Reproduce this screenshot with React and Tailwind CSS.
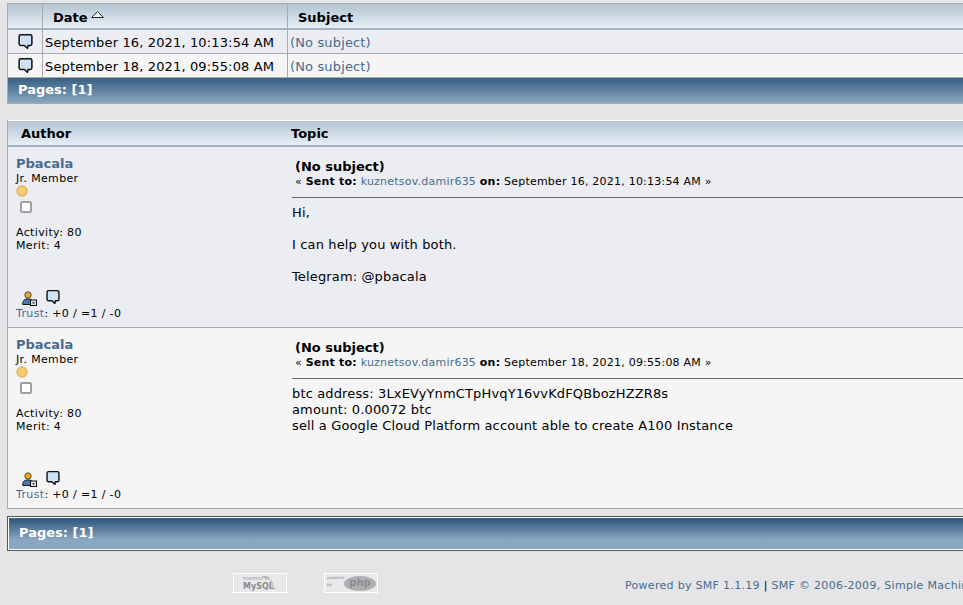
const font = { fontFamily: '"DejaVu Sans", Verdana, sans-serif' };

function Bubble({ className = "", fill = "#cfe2f5" }) {
  return (
    <svg viewBox="0 0 16 17" className={className}>
      <path d="M3 1.2h10a1.8 1.8 0 0 1 1.8 1.8v8a1.8 1.8 0 0 1-1.8 1.8h-2.3l-.5 3-3.5-3H3A1.8 1.8 0 0 1 1.2 11V3A1.8 1.8 0 0 1 3 1.2z" fill={fill} stroke="#111" strokeWidth="1.6" strokeLinejoin="round" />
    </svg>
  );
}

function UserIcon() {
  return (
    <svg viewBox="0 0 15 15" className="w-[15px] h-[15px]">
      <circle cx="6" cy="4" r="3.2" fill="#e8a820" stroke="#333" strokeWidth="0.8" />
      <path d="M0.7 13.5c0-4.5 2-5.5 5.3-5.5s5.3 1 5.3 5.5z" fill="#4a76b8" stroke="#122" strokeWidth="1" />
      <rect x="8.5" y="9" width="6" height="5.5" fill="#dfe6ee" stroke="#111" strokeWidth="1" />
      <rect x="10.5" y="11" width="2" height="1.5" fill="#333" />
    </svg>
  );
}

function Coin() {
  return (
    <svg viewBox="0 0 12 12" className="w-3 h-3 block">
      <circle cx="6" cy="6" r="5.7" fill="#e3b660" />
      <circle cx="6" cy="6" r="4" fill="#f5cd73" />
    </svg>
  );
}

function MessageRow({ date, alt }) {
  return (
    <div className={`flex h-6 border-b border-[#aaaaaa] text-[13px] leading-[26px] tracking-[0.14px] ${alt ? "bg-[#f5f5f6]" : "bg-[#ecedf3]"}`}>
      <div className="w-[35px] border-r border-[#aaaaaa] flex justify-center items-start pt-[3px] pl-[1px]">
        <Bubble className="w-[15px] h-[17px]" />
      </div>
      <div className="w-[245px] border-r border-[#aaaaaa] pl-[2px] text-black whitespace-nowrap">{date}</div>
      <div className="pl-[2px] text-[#476c8e]">(No subject)</div>
    </div>
  );
}

function Post({ date, alt, children }) {
  return (
    <div className={`flex h-[181px] border-b border-[#aaaaaa] ${alt ? "bg-[#f5f5f6]" : "bg-[#ecedf3]"}`}>
      <div className="w-[284px] shrink-0 pl-2 pt-[9px] flex flex-col text-[11px] leading-[13px] text-black tracking-[0.35px]">
        <div className="text-[13px] leading-[15px] font-bold text-[#476c8e] tracking-normal">Pbacala</div>
        <div className="mt-[1px]">Jr. Member</div>
        <div><Coin /></div>
        <div className="mt-[4px] ml-[4px] w-3 h-3 border-2 border-[#a0a0a0] rounded-[2px] bg-white" />
        <div className="mt-[13px]">Activity: 80</div>
        <div>Merit: 4</div>
        <div className="mt-auto flex gap-[9px] ml-[6px] items-end">
          <UserIcon />
          <Bubble className="w-[14px] h-4 relative -top-[1px]" />
        </div>
        <div className="mt-[1px] mb-[7px]"><span className="text-[#476c8e]">Trust</span>: +0 / =1 / -0</div>
      </div>
      <div className="flex-1 pt-[12px]">
        <div className="pl-[3px] text-[13px] leading-[15px] font-bold text-black">(No subject)</div>
        <div className="pl-[3px] mt-[1px] text-[11px] leading-[13px] text-black whitespace-nowrap tracking-[0.22px]">
          « <b>Sent to:</b> <span className="text-[#476c8e]">kuznetsov.damir635</span> <b>on:</b> {date} »
        </div>
        <div className="mt-[9px] border-t border-[#666666] pt-[7px] text-[13px] leading-[16px] text-black whitespace-nowrap tracking-[0.14px]">
          {children}
        </div>
      </div>
    </div>
  );
}

export default function App() {
  return (
    <div style={font} className="w-[963px] h-[605px] overflow-hidden bg-[#e5e5e8] pt-[3px] pl-[7px]">
      <div className="w-[1100px]">
        <div className="border border-[#aaaaaa] border-b-0">
          <div className="flex h-[26px] bg-gradient-to-b from-[#b4c4d3] to-[#e6eff7] border-b-2 border-[#a3b2c2] text-[13px] font-bold text-black leading-[27px]">
            <div className="w-[35px] border-r border-[#aaaaaa]" />
            <div className="w-[245px] border-r border-[#aaaaaa] pl-[10px] flex items-center gap-[3px]">
              <span className="relative top-[1px]">Date</span>
              <svg viewBox="0 0 13 7" className="w-[13px] h-[7px] -mt-[3px]"><path d="M0.5 6.5h12L6.5 0.7z" fill="#fff" stroke="#222" /></svg>
            </div>
            <div className="pl-[10px]">Subject</div>
          </div>
          <MessageRow date="September 16, 2021, 10:13:54 AM" />
          <MessageRow date="September 18, 2021, 09:55:08 AM" alt />
          <div className="h-[26px] bg-gradient-to-b from-[#375f82] to-[#8aa7c1] border-b border-[#aaaaaa] pl-[10px] text-[13px] font-bold text-white leading-[24px]">Pages: [1]</div>
        </div>

        <div className="mt-[16px] border-x border-[#aaaaaa]">
          <div className="flex h-[27px] bg-gradient-to-b from-[#b4c4d3] to-[#e6eff7] border-b-2 border-[#a3b2c2] border-t border-t-white text-[13px] font-bold text-black leading-[25px]">
            <div className="w-[283px] pl-[13px]">Author</div>
            <div>Topic</div>
          </div>
          <Post date="September 16, 2021, 10:13:54 AM">
            <div>Hi,</div>
            <div className="mt-[16px]">I can help you with both.</div>
            <div className="mt-[16px]">Telegram: @pbacala</div>
          </Post>
          <Post date="September 18, 2021, 09:55:08 AM" alt>
            <div>btc address: 3LxEVyYnmCTpHvqY16vvKdFQBbozHZZR8s</div>
            <div>amount: 0.00072 btc</div>
            <div>sell a Google Cloud Platform account able to create A100 Instance</div>
          </Post>
        </div>

        <div className="mt-[7px] h-[35px] border border-[#555555] p-[1px] pr-0 bg-white">
          <div className="h-full bg-gradient-to-b from-[#375f82] from-10% to-[#8aa7c1] to-70% pl-[10px] text-[13px] font-bold text-white leading-[29px]">Pages: [1]</div>
        </div>

        <div className="flex items-center mt-[22px] pl-[226px] whitespace-nowrap">
          <div className="w-[54px] h-5 border border-white bg-[#e9e9eb] relative overflow-hidden text-[#9a9a9c]">
            <span className="absolute left-[9px] top-[1px] text-[4px] leading-[8px]">POWERED BY</span>
            <span className="absolute left-[9px] top-[8px] text-[8px] leading-[10px] font-bold text-[#8a8a8c]">MySQL</span>
            <svg viewBox="0 0 54 20" className="absolute inset-0 w-full h-full"><path d="M30 3c6-1 10 3 11 9 1 3 3 4 3 5M30 3l4 1" fill="none" stroke="#9a9a9c" strokeWidth="0.8" /></svg>
          </div>
          <div className="ml-[37px] w-[54px] h-5 border border-white bg-[#e9e9eb] flex items-center justify-end pr-[1px] relative">
            <span className="absolute left-[2px] top-[1px] text-[4px] leading-[6px] text-[#8a8a8c]">powered</span>
            <span className="absolute left-[2px] top-[8px] text-[4px] leading-[6px] text-[#8a8a8c]">by</span>
            <div className="w-[32px] h-[15px] rounded-[50%] bg-[#b0b0b3] text-[10px] leading-[14px] text-center text-[#8c8c8e] font-bold">php</div>
          </div>
          <div className="ml-[247px] text-[11px] relative top-[3px] text-[#476c8e] tracking-[0.3px]">Powered by SMF 1.1.19 <span className="text-black">|</span> SMF © 2006-2009, Simple Machines</div>
        </div>
      </div>
    </div>
  );
}
